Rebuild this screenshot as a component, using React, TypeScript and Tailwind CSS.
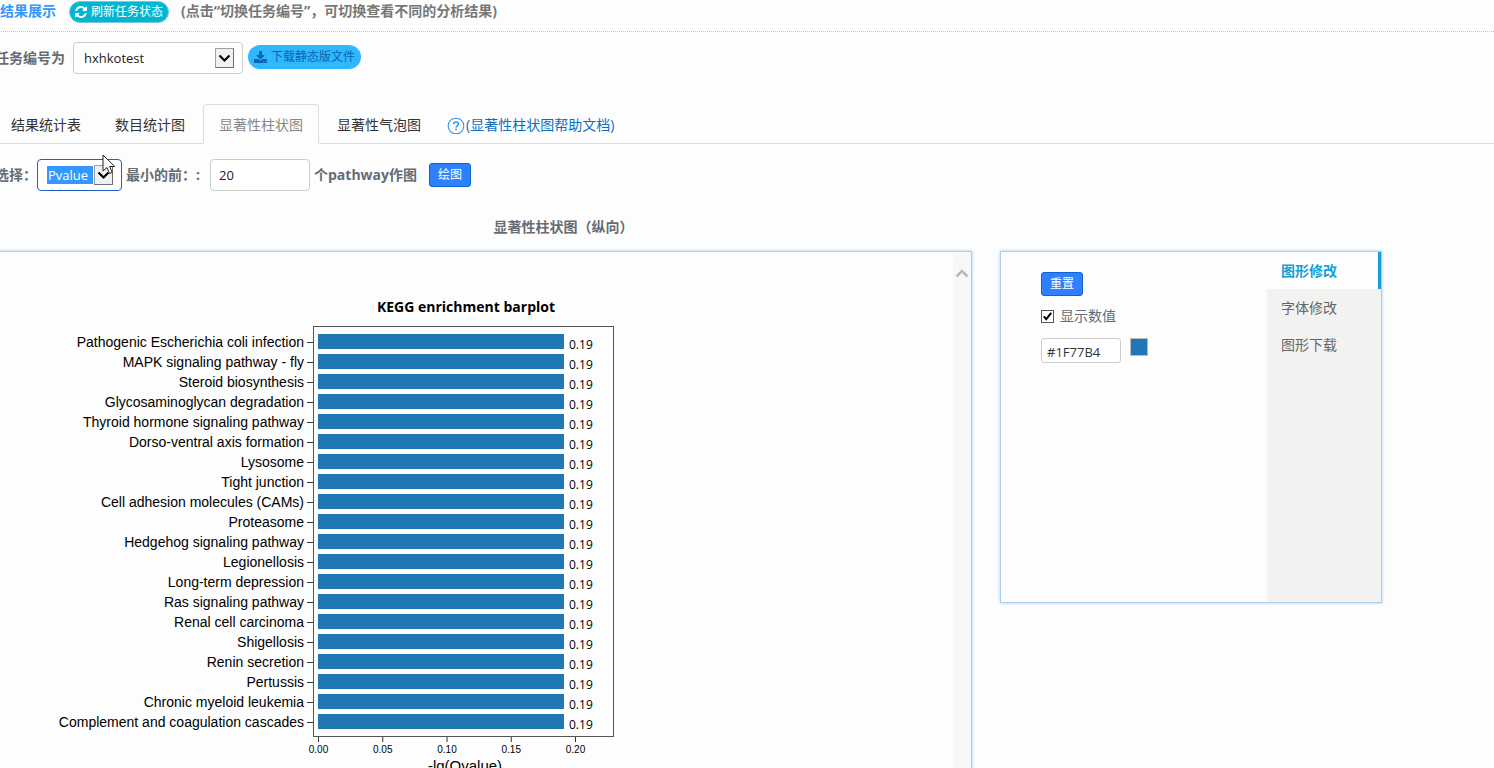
import { useState } from "react";
import type { ReactNode } from "react";

const pathways = [
  "Pathogenic Escherichia coli infection",
  "MAPK signaling pathway - fly",
  "Steroid biosynthesis",
  "Glycosaminoglycan degradation",
  "Thyroid hormone signaling pathway",
  "Dorso-ventral axis formation",
  "Lysosome",
  "Tight junction",
  "Cell adhesion molecules (CAMs)",
  "Proteasome",
  "Hedgehog signaling pathway",
  "Legionellosis",
  "Long-term depression",
  "Ras signaling pathway",
  "Renal cell carcinoma",
  "Shigellosis",
  "Renin secretion",
  "Pertussis",
  "Chronic myeloid leukemia",
  "Complement and coagulation cascades",
];

const ticks = ["0.00", "0.05", "0.10", "0.15", "0.20"];

function RefreshIcon() {
  return (
    <svg width="12" height="12" viewBox="0 0 1536 1536" fill="currentColor" aria-hidden="true">
      <path d="M1511 928q0 5-1 7-64 268-268 434.5T764 1536q-146 0-282.5-55T238 1324l-129 129q-19 19-45 19t-45-19-19-45V960q0-26 19-45t45-19h448q26 0 45 19t19 45-19 45l-137 137q71 66 161 102t187 36q134 0 250-65t186-179q11-17 53-117 8-23 30-23h192q13 0 22.5 9.5t9.5 22.5zm25-800v448q0 26-19 45t-45 19h-448q-26 0-45-19t-19-45 19-45l138-138q-148-137-349-137-134 0-250 65T332 505q-11 17-53 117-8 23-30 23H50q-13 0-22.5-9.5T18 613v-7q65-268 270-434.5T768 0q146 0 284 55.5T1297 212l130-129q19-19 45-19t45 19 19 45z" />
    </svg>
  );
}

function DownloadIcon() {
  return (
    <svg width="13" height="12" viewBox="0 0 1664 1536" fill="currentColor" aria-hidden="true">
      <path d="M1280 1344q0-26-19-45t-45-19-45 19-19 45 19 45 45 19 45-19 19-45zm256 0q0-26-19-45t-45-19-45 19-19 45 19 45 45 19 45-19 19-45zm128-224v320q0 40-28 68t-68 28H96q-40 0-68-28t-28-68v-320q0-40 28-68t68-28h465l135 136q58 56 136 56t136-56l136-136h464q40 0 68 28t28 68zm-325-569q17 41-14 70l-448 448q-18 19-45 19t-45-19L339 621q-31-29-14-70 17-39 59-39h256V64q0-26 19-45t45-19h256q26 0 45 19t19 45v448h256q42 0 59 39z" />
    </svg>
  );
}

function SelectArrow() {
  return (
    <span className="pointer-events-none flex h-5 w-[19px] shrink-0 items-center justify-center border border-[#a0a0a0] border-r-[#707070] border-b-[#707070] bg-[#f0f0f0]">
      <svg width="13" height="9" viewBox="0 0 13 9" fill="none" stroke="#000" strokeWidth="2.2">
        <path d="M1.5 1.5 6.5 6.5 11.5 1.5" />
      </svg>
    </span>
  );
}

function Tab({ active, children }: { active?: boolean; children: ReactNode }) {
  return (
    <button
      type="button"
      className={
        active
          ? "h-10 rounded-t border border-[#ddd] border-b-[#fdfdfd] px-[15px] pt-0.5 text-[#888]"
          : "h-10 px-4 pt-0.5 text-[#333]"
      }
    >
      {children}
    </button>
  );
}

function BarPlot({ color, showValues }: { color: string; showValues: boolean }) {
  return (
    <svg width="700" height="540" viewBox="-4 252 700 540" className="block max-w-none" role="img" aria-label="KEGG enrichment barplot">
      <text x="466" y="312" textAnchor="middle" className="font-['Open_Sans','Noto_Sans_CJK_SC',sans-serif] text-sm font-bold">
        KEGG enrichment barplot
      </text>
      <rect x="313.5" y="326.5" width="300" height="410" fill="none" stroke="#555" />
      {pathways.map((name, i) => (
        <g key={name}>
          <text x="304" y={347 + i * 20} textAnchor="end" className="font-['Liberation_Sans',sans-serif] text-sm">
            {name}
          </text>
          <path d={`M307 ${342.5 + i * 20}h6`} stroke="#333" />
          <rect x="318" y={334 + i * 20} width="246" height="15" fill={color} />
          {showValues && (
            <text x="569" y={349 + i * 20} className="font-['Open_Sans',sans-serif] text-xs">
              0.19
            </text>
          )}
        </g>
      ))}
      {ticks.map((t, i) => (
        <g key={t}>
          <path d={`M${318.5 + i * 64.25} 737v5`} stroke="#333" />
          <text x={318.5 + i * 64.25} y="753" textAnchor="middle" className="font-['Liberation_Sans',sans-serif] text-[10px]">
            {t}
          </text>
        </g>
      ))}
      <text x="465" y="771" textAnchor="middle" className="font-['Liberation_Sans',sans-serif] text-[15px]">
        -lg(Qvalue)
      </text>
    </svg>
  );
}

export default function App() {
  const [color, setColor] = useState("#1F77B4");
  const [showValues, setShowValues] = useState(true);

  return (
    <main className="h-screen overflow-hidden bg-[#fdfdfd] font-['Open_Sans','Noto_Sans_CJK_SC',sans-serif] text-sm text-[#666c74]">
      <div className="-ml-[5px]">
        <header className="flex h-8 items-start border-b border-dotted border-[#a9c9e8] pl-[5px]">
          <h1 className="h-[22px] leading-[22px] font-bold text-[#3399ff]">结果展示</h1>
          <button type="button" className="mt-px ml-[13px] flex h-[22px] items-center gap-1 rounded-full border border-[#7fc4dc] bg-[#00b7d3] px-[5px] text-xs text-white">
            <RefreshIcon />
            刷新任务状态
          </button>
          <p className="ml-3 leading-[22px] font-bold text-[#777]">(点击“切换任务编号”，可切换查看不同的分析结果)</p>
        </header>

        <div className="mt-2.5 flex h-8 items-center">
          <label htmlFor="task" className="font-bold">任务编号为</label>
          <span className="ml-2 flex h-8 w-[170px] items-center rounded border border-[#ccc] bg-white pr-2 pl-2.5">
            <select id="task" className="h-6 flex-1 appearance-none bg-transparent text-[13px] text-[#222] outline-none">
              <option>hxhkotest</option>
            </select>
            <SelectArrow />
          </span>
          <a href="#download" className="mb-0.5 ml-[5px] flex h-6 items-center gap-1 rounded-full bg-[#30b8ff] px-1.5 text-xs text-[#0a64b4]">
            <DownloadIcon />
            下载静态版文件
          </a>
        </div>

        <nav className="mt-[30px] flex h-10 items-end border-b border-[#ddd]">
          <div className="-mb-px flex items-center gap-0.5">
            <Tab>结果统计表</Tab>
            <Tab>数目统计图</Tab>
            <Tab active>显著性柱状图</Tab>
            <Tab>显著性气泡图</Tab>
            <a href="#help" className="ml-2 flex items-center gap-px pt-0.5 text-[#0b6fc0]">
              <svg width="18" height="18" viewBox="0 0 18 18" fill="none" stroke="#3399ee">
                <circle cx="9" cy="10" r="7.8" strokeWidth="1.1" />
                <path d="M6.6 8.3C6.6 6.7 7.6 6 9 6s2.4.8 2.4 2.1c0 1.6-2.3 1.8-2.3 3.4" strokeWidth="1.6" />
                <path d="M9.1 12.7v1.6" strokeWidth="1.7" />
              </svg>
              (显著性柱状图帮助文档)
            </a>
          </div>
        </nav>

        <form className="mt-[15px] flex h-8 items-center font-bold" onSubmit={(e) => e.preventDefault()}>
          <label htmlFor="metric">选择：</label>
          <span className="relative flex h-8 w-[85px] items-center justify-between rounded border border-[#1a62c8] bg-white pr-2 pl-[9px]">
            <select id="metric" className="h-[18px] w-[46px] appearance-none bg-[#3399ff] px-px text-[13px] leading-[18px] font-normal text-white outline-none">
              <option>Pvalue</option>
            </select>
            <SelectArrow />
            <svg className="pointer-events-none absolute -top-[6px] left-[64px]" width="14" height="21" viewBox="0 0 14 21">
              <path d="M1 1v16l4-3.5 2.6 6 2.6-1.1-2.6-5.9h5.2z" fill="#fff" stroke="#222" />
            </svg>
          </span>
          <label htmlFor="count" className="ml-1">最小的前：:</label>
          <input id="count" defaultValue="20" className="ml-2.5 h-8 w-[100px] rounded border border-[#ccc] bg-white px-2 text-[13px] font-normal text-[#222] outline-none" />
          <span className="ml-1">个pathway作图</span>
          <button type="submit" className="ml-3 h-6 rounded-[3px] border border-[#0f62d0] bg-[#2f80ff] px-2 text-xs font-normal text-white">绘图</button>
        </form>

        <h2 className="mt-[26px] max-w-[1137px] text-center leading-5 font-bold">显著性柱状图（纵向）</h2>

        <div className="mt-3.5 flex max-w-[1387px] items-start gap-7">
          <section className="flex h-[560px] min-w-0 flex-1 justify-between overflow-hidden border border-[#abcdee] shadow-[0_0_3px_#a5cbe8]">
            <div className="min-w-0 flex-1 overflow-hidden">
              <BarPlot color={color} showValues={showValues} />
            </div>
            <div className="w-[18px] shrink-0 bg-[#f8f8f8] pt-4 pl-0.5">
              <svg width="14" height="10" viewBox="0 0 14 10" fill="none" stroke="#b9b9b9" strokeWidth="2.6">
                <path d="M1.5 8.5 7 3l5.5 5.5" />
              </svg>
            </div>
          </section>

          <aside className="flex h-[352px] w-[382px] shrink-0 justify-between border border-[#abcdee] shadow-[0_0_3px_#a5cbe8]">
            <div className="flex flex-col items-start pt-5 pl-10">
              <button type="button" onClick={() => setColor("#1F77B4")} className="h-6 rounded-[3px] border border-[#0f62d0] bg-[#2f80ff] px-2 text-xs text-white">重置</button>
              <label className="mt-2.5 flex h-5 items-center gap-1.5">
                <span className="relative flex">
                  <input type="checkbox" checked={showValues} onChange={(e) => setShowValues(e.target.checked)} className="peer size-[13px] appearance-none border border-[#555] bg-white" />
                  <svg className="pointer-events-none absolute inset-0 hidden peer-checked:block" width="13" height="13" viewBox="0 0 13 13" fill="none" stroke="#000" strokeWidth="2">
                    <path d="M2.8 6.3 5.2 9.2 10.2 2.8" />
                  </svg>
                </span>
                显示数值
              </label>
              <div className="mt-3 flex items-start gap-[9px]">
                <input aria-label="颜色" value={color} onChange={(e) => setColor(e.target.value)} className="h-[25px] w-20 rounded-[3px] border border-[#ccc] bg-white px-[5px] pt-0.5 text-[13px] text-[#333] outline-none" />
                <span className="size-[18px] border border-[#bbb]" style={{ backgroundColor: color }} />
              </div>
            </div>
            <nav className="flex w-[114px] flex-col bg-[#f2f2f0]">
              <button type="button" className="h-[37px] border-r-3 border-[#149fd6] bg-[#fdfdfd] pl-3.5 text-left font-bold text-[#149fd6]">图形修改</button>
              <button type="button" className="h-[37px] pl-3.5 text-left text-[#666]">字体修改</button>
              <button type="button" className="h-[37px] pl-3.5 text-left text-[#666]">图形下载</button>
            </nav>
          </aside>
        </div>
      </div>
    </main>
  );
}
